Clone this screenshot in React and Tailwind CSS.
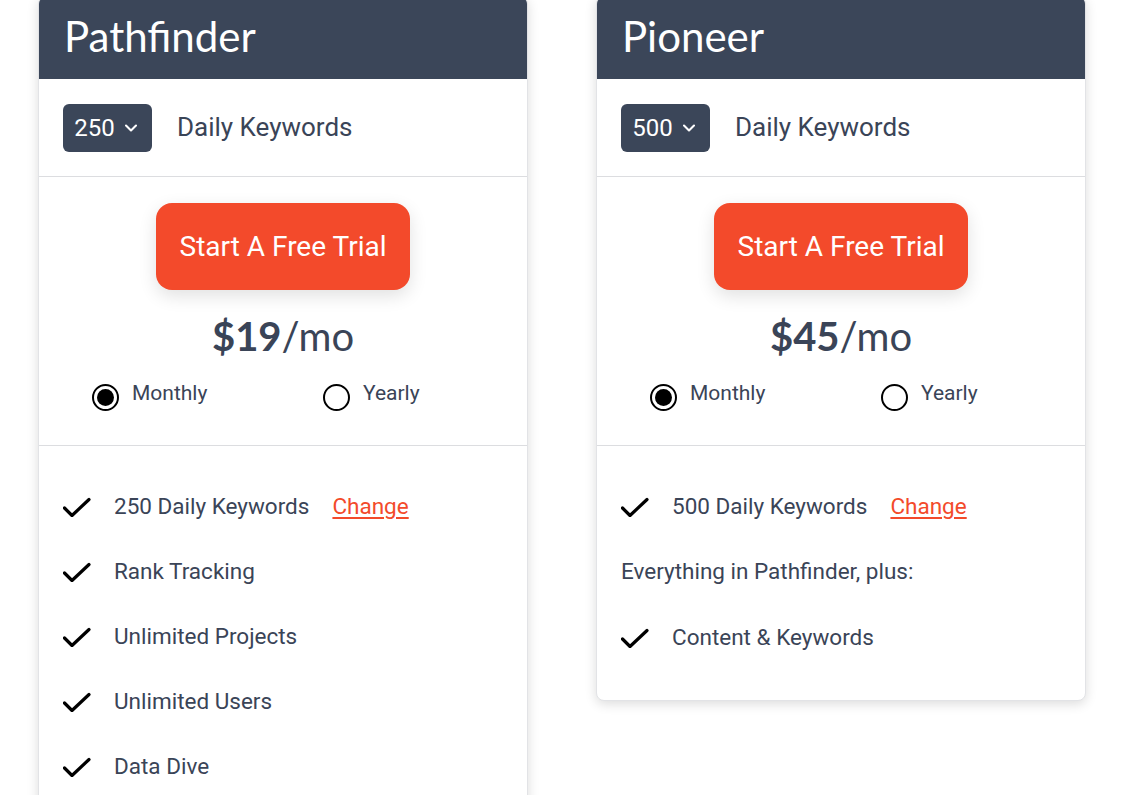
import { ChevronDown } from 'lucide-react';

const ink = 'text-[#3a4457]';

function Check() {
  return (
    <svg width="28" height="20" viewBox="0 0 28 20" className="shrink-0">
      <polyline points="1.5,11 9,18.5 26,2.5" fill="none" stroke="#000" strokeWidth="3.2" strokeLinecap="round" strokeLinejoin="round" />
    </svg>
  );
}

function Radio({ checked, label }) {
  return (
    <label className="flex items-center gap-[13px]">
      <span className="w-[27px] h-[27px] rounded-full border-[2.5px] border-black flex items-center justify-center mt-[7px]">
        {checked && <span className="w-[17px] h-[17px] rounded-full bg-black" />}
      </span>
      <span className={`text-[21px] ${ink}`}>{label}</span>
    </label>
  );
}

function Feature({ children }) {
  return (
    <li className="flex items-center gap-[23px] h-[65px]">
      <Check />
      <span className={`text-[22.5px] ${ink}`}>{children}</span>
    </li>
  );
}

function Plan({ name, count, price, children }) {
  return (
    <div className="w-[490px] bg-white rounded-lg shadow-[0_3px_12px_rgba(0,0,0,0.14)] overflow-hidden border border-[#e2e3e6]">
      <div className="bg-[#3b4659] h-[82px] px-[25px] flex items-center pb-[4px]">
        <h2 className="text-white text-[42px] leading-none font-['Lato',sans-serif]">{name}</h2>
      </div>
      <div className="flex items-center gap-[25px] px-[24px] h-[98px] border-b border-[#dcdde0]">
        <div className="bg-[#3b4659] rounded-md w-[89px] h-[48px] flex items-center justify-center gap-[6px] text-white">
          <span className="text-[24px]">{count}</span>
          <ChevronDown size={20} strokeWidth={2.5} />
        </div>
        <span className={`text-[26px] ${ink}`}>Daily Keywords</span>
      </div>
      <div className="flex flex-col items-center pt-[26px] pb-[34px] border-b border-[#dcdde0]">
        <button className="bg-[#f34a2b] text-white text-[28px] w-[254px] h-[87px] rounded-2xl shadow-[0_6px_18px_rgba(0,0,0,0.12)]">
          Start A Free Trial
        </button>
        <div className={`mt-[22px] text-[40px] leading-[1.2] font-['Lato',sans-serif] ${ink}`}>
          <span className="font-bold">${price}</span>/mo
        </div>
        <div className="self-stretch flex pl-[53px] mt-[17px]">
          <div className="w-[231px]">
            <Radio checked label="Monthly" />
          </div>
          <Radio label="Yearly" />
        </div>
      </div>
      <div className="px-[24px] pt-[28px] pb-[30px]">{children}</div>
    </div>
  );
}

function CountRow({ count }) {
  return (
    <Feature>
      {count} Daily Keywords
      <a href="#" className="ml-[23px] text-[#f34a2b] underline underline-offset-[3px]">Change</a>
    </Feature>
  );
}

export default function App() {
  return (
    <div className="min-h-screen bg-white font-['Roboto',sans-serif] overflow-hidden">
      <div className="flex items-start gap-[68px] pl-[38px] -mt-[4px]">
        <Plan name="Pathfinder" count="250" price="19">
          <ul>
            <CountRow count="250" />
            <Feature>Rank Tracking</Feature>
            <Feature>Unlimited Projects</Feature>
            <Feature>Unlimited Users</Feature>
            <Feature>Data Dive</Feature>
          </ul>
        </Plan>
        <Plan name="Pioneer" count="500" price="45">
          <ul>
            <CountRow count="500" />
            <li className={`h-[66px] flex items-center text-[22.5px] ${ink}`}>Everything in Pathfinder, plus:</li>
            <Feature>Content &amp; Keywords</Feature>
          </ul>
        </Plan>
      </div>
    </div>
  );
}
